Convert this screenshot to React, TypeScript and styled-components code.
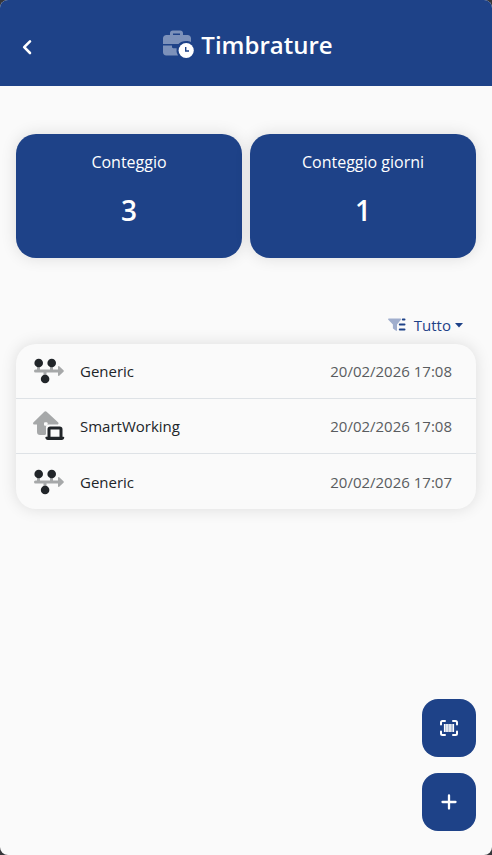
import React from "react";
import styled, { createGlobalStyle } from "styled-components";

const blue = "#1e4288";
const ink = "#212529";
const surface = "#fafafa";

const GlobalStyle = createGlobalStyle`
  * { box-sizing: border-box; }
  body {
    margin: 0;
    background: #36363a;
    color: ${ink};
    font-family: "Segoe UI", "Open Sans", "Noto Sans", sans-serif;
    font-size: 15px;
    line-height: 24px;
  }
  button { font: inherit; border: 0; cursor: pointer; }
`;

const Screen = styled.div`
  min-height: 100vh;
  background: ${surface};
  border-radius: 8px;
  overflow: hidden;
`;

const Header = styled.header`
  display: grid;
  grid-template-columns: 40px 1fr 36px;
  align-items: center;
  height: 86px;
  padding: 4px 8px 0;
  background: ${blue};
  color: #fff;
`;

const BackButton = styled.button`
  display: flex;
  align-items: center;
  justify-content: center;
  height: 40px;
  padding: 4px 2px 0 0;
  background: none;
  color: inherit;
`;

const Title = styled.h1`
  display: flex;
  align-items: center;
  justify-content: center;
  gap: 7px;
  margin: 0;
  font-size: 24px;
  line-height: 32px;
  font-weight: 600;
`;

const Main = styled.main`
  padding: 48px 16px 160px;
`;

const Stats = styled.section`
  display: grid;
  grid-template-columns: 1fr 1fr;
  gap: 8px;
`;

const StatCard = styled.article`
  display: flex;
  flex-direction: column;
  align-items: center;
  gap: 16px;
  height: 124px;
  padding: 16px;
  border-radius: 20px;
  background: ${blue};
  color: #fff;
  box-shadow: 0 0 16px rgba(0, 0, 0, 0.12);
`;

const StatLabel = styled.h2`
  margin: 0;
  font-size: 16px;
  line-height: 24px;
  font-weight: 400;
`;

const StatValue = styled.strong`
  font-size: 28px;
  line-height: 40px;
  font-weight: 600;
`;

const FilterBar = styled.div`
  display: flex;
  justify-content: flex-end;
  margin-top: 48px;
  padding-right: 13px;
`;

const FilterButton = styled.button`
  display: flex;
  align-items: center;
  height: 38px;
  padding: 0;
  background: none;
  color: ${blue};
`;

const FilterText = styled.span`
  margin: 0 4px 0 8px;
`;

const List = styled.ul`
  margin: 0;
  padding: 0;
  list-style: none;
  border-radius: 20px;
  background: ${surface};
  box-shadow: 0 0 16px rgba(0, 0, 0, 0.12);
`;

const Row = styled.li`
  display: flex;
  align-items: center;
  gap: 14px;
  height: 55px;
  padding: 0 24px 0 17px;
  &:not(:last-child) { border-bottom: 1px solid #dee2e6; }
`;

const RowName = styled.span`
  flex: 1;
`;

const RowTime = styled.time`
  color: #595c5f;
`;

const Actions = styled.div`
  position: fixed;
  right: 16px;
  bottom: 24px;
  display: flex;
  flex-direction: column;
  gap: 16px;
`;

const ActionButton = styled.button`
  display: flex;
  align-items: center;
  justify-content: center;
  width: 54px;
  height: 58px;
  padding: 0;
  border-radius: 16px;
  background: ${blue};
  color: #fff;
`;

const BackIcon = () => (
  <svg width="12" height="16" viewBox="0 0 12 16" fill="none" stroke="currentColor" strokeWidth="2.6" strokeLinecap="round" strokeLinejoin="round" aria-hidden="true">
    <path d="M9 2.4 3.2 8.2 9 14" />
  </svg>
);

const BriefcaseClockIcon = () => (
  <svg width="31" height="30" viewBox="0 0 31 30" aria-hidden="true">
    <g fill="#fff" fillOpacity=".42">
      <path fillRule="evenodd" d="M3.5 5H7V3.2C7 1.4 8.2.5 9.8.5h7.4C18.8.5 20 1.4 20 3.2V5h4.5C26.6 5 28 6.4 28 8.3V12c-1.5-.8-3-1.1-4.8-1.1-3.3 0-6 1.1-7.7 3.1H0V8.3C0 6.4 1.4 5 3.5 5ZM10 5h7V3.5h-7Z" />
      <path d="M0 15.500h9V17c0 .7.500 1.200 1.200 1.200h3.400A10 10 0 0 0 15 25.500H3.300C1.300 25.500 0 24.200 0 22.300Z" />
    </g>
    <circle cx="23.200" cy="20.500" r="9" fill={blue} />
    <circle cx="23.200" cy="20.500" r="7.600" fill="#fff" />
    <path d="M22.700 17v4h3.300" fill="none" stroke={blue} strokeWidth="1.400" />
  </svg>
);

const FilterIcon = () => (
  <svg width="18" height="14" viewBox="0 0 18 14" aria-hidden="true">
    <path fill="#a0aecd" d="M.7.5h11.800c.6 0 .8.7.4 1.200L9 6.500v5.800c0 .6-.6.8-1 .5L5.300 10.700c-.3-.2-.4-.4-.4-.8V6.500L.3 1.700C-.1 1.200.1.500.700.500Z" />
    <path d="M14.800 1.500H16.500M11.800 6.500H16.500M11.800 11.500H16.500" stroke={blue} strokeWidth="2" strokeLinecap="round" />
  </svg>
);

const CaretIcon = () => (
  <svg width="8" height="5" viewBox="0 0 8 5" aria-hidden="true">
    <path d="M0 0h8L4 4.500Z" fill="currentColor" />
  </svg>
);

const TimelineIcon = () => (
  <svg width="33" height="30" viewBox="0 0 33 30" aria-hidden="true">
    <path d="M2.500 15h23M5.500 8v7M18.500 8v7M12 15v7" fill="none" stroke="#a6a8a9" strokeWidth="3" strokeLinecap="round" />
    <path d="M25 10.800v8.400c0 .7.700 1 1.200.6l4.300-4c.5-.5.500-1.100 0-1.600l-4.300-4c-.5-.4-1.200-.1-1.200.6Z" fill="#a6a8a9" />
    <g fill={ink}>
      <circle cx="5.700" cy="7" r="4.300" />
      <circle cx="18.700" cy="7" r="4.300" />
      <circle cx="12.100" cy="23" r="4.300" />
    </g>
  </svg>
);

const HouseLaptopIcon = () => (
  <svg width="33" height="30" viewBox="0 0 33 30" aria-hidden="true">
    <path fill="#a6a8a9" d="M11.300.8a1.700 1.700 0 0 1 2.300 0L25 11.200c1 .9.500 2.400-.8 2.400H15.500c-1.500 0-2.500 1.100-2.500 2.600v6.600c0 .7-.4 1.200-1.200 1.200H7c-1.900 0-3-1.100-3-3v-7.400H1.500c-1.400 0-2-1.500-.9-2.400Z" />
    <rect x="11" y="11.200" width="3.600" height="3.600" rx="1" fill={surface} />
    <path d="M16 26V18.300c0-.8.500-1.300 1.300-1.300h9.400c.8 0 1.300.500 1.300 1.300V26" fill="none" stroke={ink} strokeWidth="3" />
    <path d="M13.200 25.800h17.200c.6 0 .8.300.8.800 0 1.500-1 2.400-2.500 2.400H14.900c-1.500 0-2.500-.9-2.500-2.400 0-.5.300-.8.800-.8Z" fill={ink} />
  </svg>
);

const BarcodeScanIcon = () => (
  <svg width="18" height="16" viewBox="0 0 18 16" fill="none" aria-hidden="true">
    <path d="M1 4.500V2.500C1 1.500 1.500 1 2.500 1H5M13 1h2.500c1 0 1.500.5 1.500 1.500v2M17 11.500v2c0 1-.5 1.500-1.500 1.500H13M5 15H2.500C1.500 15 1 14.500 1 13.500v-2" stroke="currentColor" strokeWidth="2" strokeLinecap="round" />
    <rect x="4" y="4" width="10" height="8" fill="currentColor" fillOpacity=".65" />
    <path d="M4.500 4v8M7 4v8M10 4v8M13.500 4v8" stroke="currentColor" strokeWidth="1.200" />
  </svg>
);

const PlusIcon = () => (
  <svg width="16" height="16" viewBox="0 0 16 16" fill="none" stroke="currentColor" strokeWidth="2.300" strokeLinecap="round" aria-hidden="true">
    <path d="M8 1.500v13M1.500 8h13" />
  </svg>
);

const stats = [
  { label: "Conteggio", value: 3 },
  { label: "Conteggio giorni", value: 1 },
];

const entries = [
  { id: 1, name: "Generic", Icon: TimelineIcon, iso: "2026-02-20T17:08", time: "20/02/2026 17:08" },
  { id: 2, name: "SmartWorking", Icon: HouseLaptopIcon, iso: "2026-02-20T17:08", time: "20/02/2026 17:08" },
  { id: 3, name: "Generic", Icon: TimelineIcon, iso: "2026-02-20T17:07", time: "20/02/2026 17:07" },
];

export default function App() {
  return (
    <>
      <GlobalStyle />
      <Screen>
        <Header>
          <BackButton type="button" aria-label="Indietro"><BackIcon /></BackButton>
          <Title><BriefcaseClockIcon />Timbrature</Title>
        </Header>
        <Main>
          <Stats>
            {stats.map(({ label, value }) => (
              <StatCard key={label}>
                <StatLabel>{label}</StatLabel>
                <StatValue>{value}</StatValue>
              </StatCard>
            ))}
          </Stats>
          <FilterBar>
            <FilterButton type="button" aria-haspopup="menu">
              <FilterIcon />
              <FilterText>Tutto</FilterText>
              <CaretIcon />
            </FilterButton>
          </FilterBar>
          <List>
            {entries.map(({ id, name, Icon, iso, time }) => (
              <Row key={id}>
                <Icon />
                <RowName>{name}</RowName>
                <RowTime dateTime={iso}>{time}</RowTime>
              </Row>
            ))}
          </List>
        </Main>
        <Actions>
          <ActionButton type="button" aria-label="Scansiona codice"><BarcodeScanIcon /></ActionButton>
          <ActionButton type="button" aria-label="Aggiungi timbratura"><PlusIcon /></ActionButton>
        </Actions>
      </Screen>
    </>
  );
}
